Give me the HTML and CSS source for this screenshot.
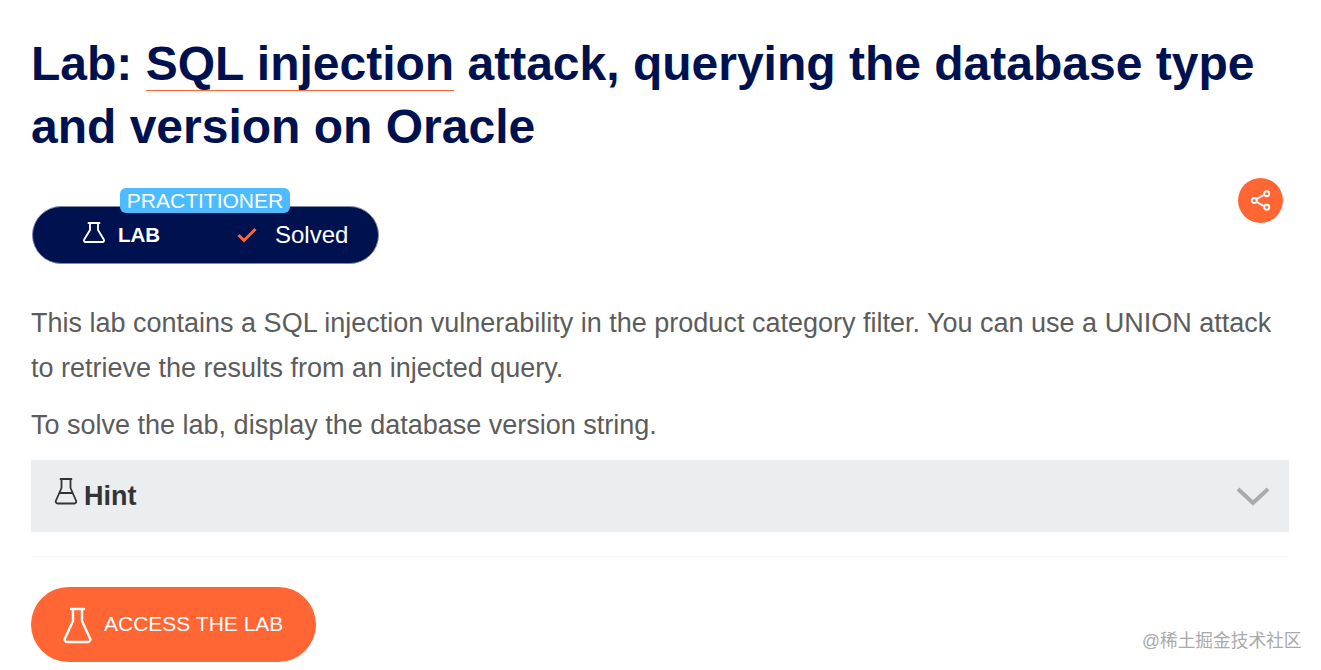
FILE: index.html
```html
<!DOCTYPE html>
<html lang="en">
<head>
<meta charset="utf-8">
<title>Lab: SQL injection attack</title>
<link rel="stylesheet" href="styles.css">
</head>
<body>
<main class="page">
  <h1 class="title">Lab: <a class="title-link">SQL injection</a> attack, querying the database type and version on Oracle</h1>
  <div class="status-row">
    <div class="pill">
      <span class="level">PRACTITIONER</span>
      <span class="pill-lab">
        <svg class="flask-sm" viewBox="0 0 24 24" fill="none" stroke="currentColor" stroke-width="1.900" stroke-linejoin="round" stroke-linecap="round"><path d="M6.500 2h11M8 2v7L2.200 18.500a1.600 1.600 0 0 0 1.400 2.500h16.800a1.600 1.600 0 0 0 1.400-2.500L16 9V2"/></svg>
        <b>LAB</b>
      </span>
      <span class="pill-solved">
        <svg class="check" viewBox="0 0 20 16" fill="none" stroke="#ff6633" stroke-width="3"><path d="M1.500 8l5.500 5.500L18.500 2"/></svg>
        <span>Solved</span>
      </span>
    </div>
    <button class="share" aria-label="Share">
      <svg viewBox="0 0 24 24" fill="none" stroke="#fff" stroke-width="1.800"><path d="M8.500 10.500l7-4M8.500 13.500l7 4"/><circle cx="6" cy="12" r="2.400"/><circle cx="18" cy="5.500" r="2.400"/><circle cx="18" cy="18.500" r="2.400"/></svg>
    </button>
  </div>
  <p class="para first">This lab contains a SQL injection vulnerability in the product category filter. You can use a UNION attack to retrieve the results from an injected query.</p>
  <p class="para second">To solve the lab, display the database version string.</p>
  <div class="hint">
    <svg class="flask-hint" viewBox="0 0 24 28" fill="none" stroke="currentColor" stroke-width="1.800" stroke-linejoin="round" stroke-linecap="round"><path d="M6.500 2h11M7.500 2v9L2 23.500a2 2 0 0 0 1.800 3h16.400a2 2 0 0 0 1.800-3L16.500 11V2M5.500 16h13"/></svg>
    <span class="hint-label">Hint</span>
    <svg class="chevron" viewBox="0 0 34 20" fill="none" stroke="#a8acae" stroke-width="4"><path d="M2 3l15 14L32 3"/></svg>
  </div>
  <hr class="rule">
  <a class="access">
    <svg class="flask-btn" viewBox="0 0 30 38" fill="none" stroke="currentColor" stroke-width="2.400" stroke-linejoin="round" stroke-linecap="round"><path d="M8 3h13M10 3v12L2.200 32a2.500 2.500 0 0 0 2.300 4h20a2.500 2.500 0 0 0 2.300-4L19 15V3"/></svg>
    <span class="access-label">ACCESS THE LAB</span>
  </a>
</main>
<div class="watermark">@稀土掘金技术社区</div>
</body>
</html>
```

FILE: styles.css
```css
html, body { margin: 0; padding: 0; background: #fff; height: 670px; overflow: hidden; }
body { font-family: "Liberation Sans", Arial, sans-serif; position: relative; }
.page { padding: 32px 32px 0 31px; }
.title { margin: 0; font-size: 48px; line-height: 63px; font-weight: 700; color: #00114f; }
.title-link { border-bottom: 1px solid #ff6633; }
.status-row { display: flex; justify-content: space-between; align-items: flex-start; margin-top: 20px; padding-right: 6px; height: 110px; }
.pill { position: relative; width: 347px; height: 58px; margin: 28px 0 0 1px; background: #00114f; border: 1px solid #7f89a8; border-radius: 29px; color: #fff; display: flex; align-items: center; box-sizing: border-box; }
.level { position: absolute; left: 87px; top: -19px; width: 170px; height: 25px; background: #4cbcff; border-radius: 6px; font-size: 21px; line-height: 25px; text-align: center; color: #fff; }
.pill-lab { display: flex; align-items: center; margin-left: 49px; width: 154px; }
.pill-lab b { font-size: 20.500px; margin-left: 12px; }
.flask-sm { width: 24px; height: 24px; margin-top: -4px; }
.pill-solved { display: flex; align-items: center; font-size: 24px; }
.check { width: 22px; height: 16px; margin-right: 17px; }
.share { width: 45px; height: 45px; border-radius: 50%; border: 0; padding: 10px; background: #ff6633; }
.share svg { width: 25px; height: 25px; display: block; }
.para { margin: 0; font-size: 27px; line-height: 45px; color: #5c5c5c; }
.first { margin-top: 13px; }
.second { margin-top: 12px; }
.hint { margin-top: 12px; height: 72px; background: #ebeef0; display: flex; align-items: center; color: #333; padding: 0 19px 0 23px; }
.flask-hint { width: 24px; height: 28px; margin-top: -10px; }
.hint-label { font-size: 27px; font-weight: 700; margin-left: 6px; flex: 1; }
.chevron { width: 34px; height: 20px; }
.rule { margin: 24px 0 30px; border: 0; border-top: 1px solid #f5f5f5; }
.access { display: inline-flex; align-items: center; width: 285px; height: 75px; border-radius: 38px; background: #ff6633; color: #fff; font-size: 21px; box-sizing: border-box; padding-left: 32px; }
.access-label { margin-top: -2px; }
.flask-btn { width: 30px; height: 38px; margin-right: 11px; }
.watermark { position: absolute; left: 1142px; top: 630px; font-family: "Liberation Sans", "Noto Sans CJK SC", sans-serif; font-size: 17.700px; line-height: 22px; color: #a9a9a9; }
```
